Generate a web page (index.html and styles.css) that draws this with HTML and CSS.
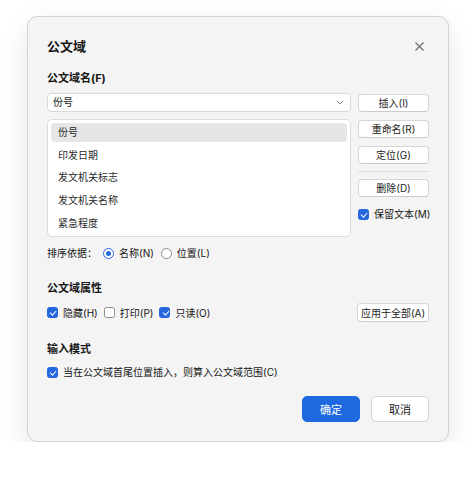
FILE: index.html
```html
<!DOCTYPE html>
<html lang="zh-CN">
<head>
<meta charset="utf-8">
<title>公文域</title>
<link rel="stylesheet" href="styles.css">
</head>
<body>
<div class="dialog">
  <div class="title-row">
    <div class="title">公文域</div>
    <div class="close">
      <svg width="9" height="9" viewBox="0 0 9 9"><path d="M0.5 0.5L8.5 8.5M8.5 0.5L0.5 8.5" stroke="#6b6b6b" stroke-width="1.1" fill="none"/></svg>
    </div>
  </div>

  <div class="section-title first">公文域名(F)</div>

  <div class="main">
    <div class="left-col">
      <div class="combo">
        <span>份号</span>
        <svg class="chev" width="8" height="5" viewBox="0 0 8 5"><path d="M0.8 0.8L4 3.8L7.2 0.8" stroke="#7a7a7a" stroke-width="1" fill="none"/></svg>
      </div>
      <div class="list">
        <div class="item selected">份号</div>
        <div class="item">印发日期</div>
        <div class="item">发文机关标志</div>
        <div class="item">发文机关名称</div>
        <div class="item">紧急程度</div>
      </div>
    </div>
    <div class="right-col">
      <div class="btn">插入(I)</div>
      <div class="btn">重命名(R)</div>
      <div class="btn">定位(G)</div>
      <div class="sep"></div>
      <div class="btn">删除(D)</div>
      <label class="check-item keep"><span class="cb checked"></span><span>保留文本(M)</span></label>
    </div>
  </div>

  <div class="sort-row">
    <span class="sort-label">排序依据：</span>
    <span class="radio-item"><span class="radio on"></span><span>名称(N)</span></span>
    <span class="radio-item"><span class="radio"></span><span>位置(L)</span></span>
  </div>

  <div class="section-title">公文域属性</div>
  <div class="attr-row">
    <div class="checks">
      <span class="check-item"><span class="cb checked"></span><span>隐藏(H)</span></span>
      <span class="check-item"><span class="cb"></span><span>打印(P)</span></span>
      <span class="check-item"><span class="cb checked"></span><span>只读(O)</span></span>
    </div>
    <div class="btn">应用于全部(A)</div>
  </div>

  <div class="section-title">输入模式</div>
  <div class="mode-row">
    <span class="check-item"><span class="cb checked"></span><span>当在公文域首尾位置插入，则算入公文域范围(C)</span></span>
  </div>

  <div class="footer">
    <div class="fbtn primary">确定</div>
    <div class="fbtn">取消</div>
  </div>
</div>
</body>
</html>
```

FILE: styles.css
```css
* { box-sizing: border-box; }
html, body { margin: 0; padding: 0; background: #ffffff; }
body {
  padding: 16px 0 0 27px;
  font-family: Inter, "Noto Sans CJK SC", sans-serif;
  color: #161616;
  font-size: 10px;
}
.dialog {
  width: 422px;
  height: 426px;
  background: #f4f4f4;
  border: 1px solid #d4d4d4;
  border-radius: 10px;
  box-shadow: 0 10px 28px rgba(0,0,0,0.10);
  padding: 19px 19px 0 19px;
  display: flex;
  flex-direction: column;
}
.title-row {
  display: flex;
  justify-content: space-between;
  align-items: center;
  height: 20px;
}
.title { font-size: 13px; font-weight: 700; line-height: 20px; }
.close {
  width: 19px; height: 19px;
  display: flex; align-items: center; justify-content: center;
}
.section-title {
  font-size: 11px;
  font-weight: 700;
  line-height: 16px;
  height: 16px;
  margin-top: 19px;
}
.section-title.first { margin-top: 14px; }
.main {
  display: grid;
  grid-template-columns: 1fr 71px;
  column-gap: 7px;
  margin-top: 7px;
}
.left-col { display: flex; flex-direction: column; gap: 7px; }
.combo {
  height: 19px;
  background: #ffffff;
  border: 1px solid #d8d8d8;
  border-radius: 4px;
  display: flex;
  align-items: center;
  justify-content: space-between;
  padding: 0 6px 0 5px;
  line-height: 17px;
}
.list {
  height: 118px;
  background: #ffffff;
  border: 1px solid #dcdcdc;
  border-radius: 5px;
  padding: 3px;
  display: flex;
  flex-direction: column;
  gap: 3.65px;
}
.item {
  height: 19px;
  line-height: 19px;
  padding-left: 7px;
  border-radius: 4px;
  color: #2a2a2a;
}
.item.selected { background: #e6e6e6; }
.right-col {
  display: flex;
  flex-direction: column;
  padding-top: 1px;
  min-width: 0;
}
.right-col .btn + .btn { margin-top: 8px; }
.btn {
  height: 18px;
  background: #ffffff;
  border: 1px solid #d6d6d6;
  border-bottom-color: #cbcbcb;
  border-radius: 4px;
  display: flex;
  align-items: center;
  justify-content: center;
  color: #222;
  line-height: 16px;
  white-space: nowrap;
}
.sep {
  height: 1px;
  background: #dedede;
  margin: 7px 0 7px 0;
}
.check-item {
  display: inline-flex;
  align-items: center;
  gap: 5px;
  line-height: 14px;
  height: 14px;
  white-space: nowrap;
}
.keep { margin-top: 10px; }
.cb {
  width: 11px; height: 11px;
  border: 1px solid #8c8c8c;
  border-radius: 2.5px;
  background: #ffffff;
  display: inline-block;
  position: relative;
  flex: none;
}
.cb.checked { background: #2467df; border-color: #2467df; }
.cb.checked::after {
  content: "";
  position: absolute;
  left: 3.3px; top: 1.2px;
  width: 2.6px; height: 5.4px;
  border: solid #fff;
  border-width: 0 1.3px 1.3px 0;
  transform: rotate(42deg);
}
.sort-row {
  margin-top: 8px;
  height: 16px;
  display: flex;
  align-items: center;
  line-height: 16px;
}
.sort-label { margin-right: 6px; }
.radio-item { display: inline-flex; align-items: center; gap: 5px; margin-right: 7px; }
.radio {
  width: 11px; height: 11px;
  border-radius: 50%;
  border: 1px solid #8c8c8c;
  background: #fff;
  position: relative;
  flex: none;
}
.radio.on { border-color: #2467df; border-width: 1.2px; }
.radio.on::after {
  content: "";
  position: absolute;
  left: 50%; top: 50%;
  width: 5px; height: 5px;
  margin: -2.5px 0 0 -2.5px;
  border-radius: 50%;
  background: #2467df;
}
.attr-row {
  margin-top: 7px;
  height: 19px;
  display: flex;
  align-items: center;
  justify-content: space-between;
}
.attr-row .btn { width: 72px; height: 19px; }
.checks { display: flex; align-items: center; gap: 6px; }
.mode-row { margin-top: 8px; height: 14px; display: flex; align-items: center; }
.footer {
  margin-top: 17px;
  display: flex;
  justify-content: flex-end;
  gap: 11px;
}
.fbtn {
  width: 58px; height: 26px;
  border-radius: 5px;
  background: #ffffff;
  border: 1px solid #d4d4d4;
  display: flex; align-items: center; justify-content: center;
  font-size: 11px;
  color: #222;
}
.fbtn.primary {
  background: #1f69e0;
  border-color: #1f69e0;
  color: #ffffff;
}
```
